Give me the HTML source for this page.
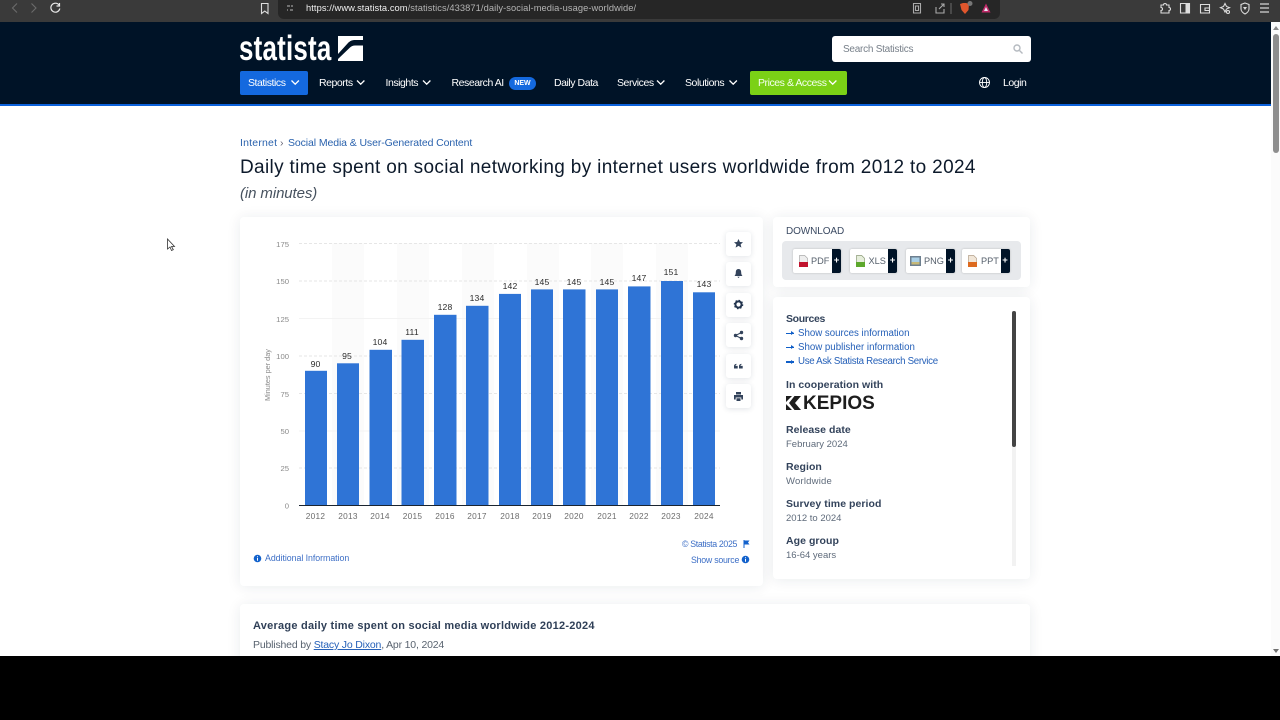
<!DOCTYPE html>
<html lang="en"><head><meta charset="utf-8"><title>Statista</title>
<style>
*{box-sizing:border-box}
html,body{margin:0;padding:0;width:1280px;height:720px;overflow:hidden;background:#000;font-family:"Liberation Sans",sans-serif}
#p{position:absolute;left:0;top:0;width:1280px;height:656px;background:#fff;overflow:hidden}
.a{position:absolute;white-space:nowrap}
.card{position:absolute;background:#fff;border-radius:4px;box-shadow:0 1px 14px rgba(20,40,70,.09)}
.nav{position:absolute;top:76.5px;font-size:10.5px;line-height:13px;color:#fff;white-space:nowrap;letter-spacing:-.45px}
.tool{position:absolute;left:726px;width:25px;height:24px;background:#fff;border-radius:3px;box-shadow:0 1px 6px rgba(20,40,70,.13)}
.tool svg{position:absolute;left:7px;top:6.5px}
.h{position:absolute;left:786px;font-size:10.5px;font-weight:bold;color:#33435b;white-space:nowrap;line-height:13px;letter-spacing:.05px}
.v{position:absolute;left:786px;font-size:9.5px;color:#5f6b7b;white-space:nowrap;line-height:12px}
.l{position:absolute;left:798px;font-size:9.7px;color:#2560b8;white-space:nowrap;line-height:12px}
.ar{position:absolute;left:786px;width:8px;height:1.5px;background:#0f5ec8}
.ar:after{content:"";position:absolute;right:0;top:-1.5px;border-left:3px solid #0f5ec8;border-top:2.2px solid transparent;border-bottom:2.2px solid transparent}
.btn{position:absolute;top:249px;height:24px;background:#fff;border-radius:2px;box-shadow:0 0 2px rgba(0,0,0,.2);font-size:9.2px;color:#555f6b;line-height:24px}
.btn b{position:absolute;right:0;top:0;width:9px;height:24px;background:#001327;color:#fff;font-size:9.5px;text-align:center;border-radius:0 2px 2px 0}
.btn span{position:absolute;top:0}
.btn svg{position:absolute;top:6px}
</style></head><body>
<div id="p">
<!-- browser bar -->
<div class="a" style="left:0;top:0;width:1280px;height:22px;background:#3a3a3a"></div>
<div class="a" style="left:278px;top:0;width:722px;height:19px;background:#262626;border-radius:0 0 6px 6px"></div>
<svg class="a" style="left:0;top:0" width="1280" height="22" fill="none" stroke="#ddd" stroke-width="1.1">
<path d="M17 3.5L12.5 8l4.5 4.5M31.5 3.5L36 8l-4.500 4.500" stroke="#6b6b6b"/>
<path d="M59 5a4.500 4.500 0 1 0 .8 3.500M59.500 3v3h-3" stroke="#e8e8e8" stroke-width="1.200"/>
<path d="M261.500 3.500h6.500v10l-3.250-2.400-3.250 2.400z"/>
<path d="M287 6h3M291 6h2M287 10h1M290 10h3" stroke="#bbb"/>
<path d="M913.500 3.500h7v9.500h-7zM915.500 6h3v4.500h-3z" stroke="#aaa"/>
<path d="M936 7v6h8V9M939 9l5-5m-3 0h3v3" stroke="#aaa"/>
<path d="M951 3v11" stroke="#666"/>
<path d="M960 4l3-1h3l3 1-.5 6-3.500 4-3.500-4z" fill="#e0562c" stroke="none"/>
<circle cx="970" cy="3.500" r="2.500" fill="#777" stroke="none"/>
<path d="M986 3.500l4.500 9h-9z" fill="#c02a68" stroke="none"/><path d="M986 7l2 4h-4z" fill="#e9e6f5" stroke="none"/>
<path d="M1161 5h2.500a1.500 1.500 0 0 1 3 0h2.500v2.500a1.500 1.500 0 0 1 0 3V13h-8v-2.500a1.500 1.500 0 0 0 0-3z"/>
<path d="M1180.500 3.500h9v9.500h-9z"/><path d="M1185.500 4h4v8.500h-4z" fill="#ddd" stroke="none"/>
<path d="M1200.500 4.500h9v8.500h-9zM1205 8h4.500v2.500H1205z"/>
<path d="M1225 3.500l1.500 3 3 1.200-3 1.300-1.500 3-1.500-3-3-1.300 3-1.200z"/><circle cx="1228" cy="12" r="1.500"/>
<path d="M1245 3l4 1.500V9c0 2-2 4-4 5-2-1-4-3-4-5V4.500z"/><path d="M1243 7h4l-2 3z" fill="#ddd" stroke="none"/>
<path d="M1260 4h9M1260 8h9M1260 12h9" stroke="#bbb" stroke-width="1.400"/>
</svg>
<div class="a" style="left:306px;top:2px;font-size:9.3px;line-height:12px;color:#f0f0f0;letter-spacing:.08px">https://www.statista.com<span style="color:#b4b4b4">/statistics/433871/daily-social-media-usage-worldwide/</span></div>
<!-- header -->
<div class="a" style="left:0;top:22px;width:1271px;height:82px;background:#001327"></div>
<div class="a" style="left:0;top:104px;width:1271px;height:2px;background:#0c62dc"></div>
<div class="a" style="left:239px;top:29.500px;font-size:35px;line-height:38px;font-weight:bold;color:#fff;transform:scaleX(.74);transform-origin:0 0;letter-spacing:.3px">statista</div>
<svg class="a" style="left:338px;top:36px" width="25" height="25"><rect width="25" height="25" fill="#fff"/><path d="M25 4H17C14 4 12 5 10 7L0 18V23L12 11.500C13.500 10.200 15 9.500 17 9.500H25Z" fill="#001327"/></svg>
<div class="a" style="left:832px;top:35.500px;width:199px;height:26px;background:#fff;border-radius:3px"></div>
<div class="a" style="left:843px;top:42.500px;font-size:10px;line-height:13px;color:#78808a;letter-spacing:-.25px">Search Statistics</div>
<svg class="a" style="left:1013px;top:44px" width="10" height="10" fill="none" stroke="#b5bac0" stroke-width="1.400"><circle cx="4" cy="4" r="3"/><path d="M6.500 6.500L9.500 9.500"/></svg>
<div class="a" style="left:240px;top:71px;width:68px;height:24px;background:#1469df;border-radius:2px"></div>
<div class="a" style="left:750px;top:71px;width:97px;height:24px;background:#7bd116;border-radius:2px"></div>
<div class="nav" style="left:248px">Statistics</div>
<div class="nav" style="left:319px">Reports</div>
<div class="nav" style="left:385.500px">Insights</div>
<div class="nav" style="left:451.500px">Research AI</div>
<div class="a" style="left:509px;top:76.500px;width:27px;height:13px;background:#1469df;border-radius:7px;color:#fff;font-size:7px;font-weight:bold;line-height:13px;text-align:center">NEW</div>
<div class="nav" style="left:554px">Daily Data</div>
<div class="nav" style="left:617px">Services</div>
<div class="nav" style="left:685px">Solutions</div>
<div class="nav" style="left:758px;color:#f4fff0">Prices &amp; Access</div>
<div class="nav" style="left:1003px">Login</div>
<svg class="a" style="left:0;top:70px" width="1100" height="26" fill="none" stroke="#fff" stroke-width="1.300">
<path d="M291.500 10.500l3.700 3.700 3.700-3.700M357 10.500l3.700 3.700 3.700-3.700M423 10.500l3.700 3.700 3.700-3.700M657 10.500l3.700 3.700 3.700-3.700M729.500 10.500l3.700 3.700 3.700-3.700M829 10.500l3.700 3.700 3.700-3.700"/>
<g stroke-width=".9"><circle cx="984.500" cy="12.500" r="5"/><ellipse cx="984.500" cy="12.500" rx="2.200" ry="5"/><path d="M979.500 12.500h10"/></g>
</svg>
<!-- heading -->
<div class="a" style="left:240px;top:136px;font-size:10.500px;line-height:14px;color:#2a62ad;letter-spacing:.2px">Internet</div>
<div class="a" style="left:280px;top:136px;font-size:10.500px;line-height:14px;color:#667">›</div>
<div class="a" style="left:288px;top:136px;font-size:10.500px;line-height:14px;color:#2a62ad;letter-spacing:-.1px">Social Media &amp; User-Generated Content</div>
<div class="a" style="left:240px;top:156.500px;font-size:19px;line-height:22px;color:#0d1a2b;letter-spacing:.34px">Daily time spent on social networking by internet users worldwide from 2012 to 2024</div>
<div class="a" style="left:240px;top:183.500px;font-size:15px;line-height:19px;font-style:italic;color:#47525f;letter-spacing:-.1px">(in minutes)</div>
<!-- chart card -->
<div class="card" style="left:240px;top:217px;width:523px;height:369px"></div>
<div class="card" style="left:773px;top:217px;width:257px;height:70px"></div>
<div class="card" style="left:773px;top:297px;width:257px;height:282px"></div>
<div class="card" style="left:240px;top:604px;width:790px;height:80px"></div>
<svg class="a" style="left:240px;top:217px" width="523" height="340" font-family="Liberation Sans, sans-serif">
<g fill="#fbfbfb"><rect x="92" y="26" width="32" height="262"/><rect x="157" y="26" width="32" height="262"/><rect x="222" y="26" width="32" height="262"/><rect x="287" y="26" width="32" height="262"/><rect x="351" y="26" width="32" height="262"/><rect x="416" y="26" width="32" height="262"/></g>
<g stroke="#e6e6e6" stroke-width="1" stroke-dasharray="3 2"><path d="M59 26.500h421M59 64h421M59 139h421M59 176.500h421M59 251h421"/></g>
<g stroke="#f3f3f3" stroke-width="1"><path d="M59 101.500h421M59 214h421"/></g>
<g fill="#2f74d6">
<rect x="65" y="153.800" width="22" height="134.700"/><rect x="97" y="146.300" width="22" height="142.200"/><rect x="129.500" y="132.800" width="22.500" height="155.700"/><rect x="161.500" y="122.800" width="22.500" height="165.700"/><rect x="194" y="97.800" width="22.500" height="190.700"/><rect x="226" y="88.800" width="22.500" height="199.700"/><rect x="259" y="76.900" width="22" height="211.600"/><rect x="291" y="72.400" width="22" height="216.100"/><rect x="323" y="72.400" width="22.500" height="216.100"/><rect x="356" y="72.400" width="22" height="216.100"/><rect x="388" y="69.400" width="22.500" height="219.100"/><rect x="421" y="64" width="22" height="224.500"/><rect x="453" y="75.300" width="22" height="213.200"/>
</g>
<path d="M59 288.500h421" stroke="#1a2430" stroke-width="1"/>
<g font-size="7.700" fill="#8a8a8a" text-anchor="end"><text x="49" y="30">175</text><text x="49" y="67">150</text><text x="49" y="105">125</text><text x="49" y="142">100</text><text x="49" y="180">75</text><text x="49" y="217">50</text><text x="49" y="254">25</text><text x="49" y="291.500">0</text></g>
<text transform="translate(30 184) rotate(-90)" font-size="7.300" fill="#8a8a8a">Minutes per day</text>
<g font-size="8.600" fill="#2c2c2c" text-anchor="middle" letter-spacing=".15"><text x="75.500" y="150">90</text><text x="107" y="142">95</text><text x="140" y="128">104</text><text x="172" y="118">111</text><text x="205" y="93">128</text><text x="237" y="84">134</text><text x="270" y="72">142</text><text x="302" y="68">145</text><text x="334" y="68">145</text><text x="367" y="68">145</text><text x="399" y="64">147</text><text x="431" y="58">151</text><text x="464" y="70">143</text></g>
<g font-size="8.300" fill="#6c6c6c" text-anchor="middle" letter-spacing=".25"><text x="75.500" y="302">2012</text><text x="108" y="302">2013</text><text x="140" y="302">2014</text><text x="172.500" y="302">2015</text><text x="205" y="302">2016</text><text x="237" y="302">2017</text><text x="270" y="302">2018</text><text x="302" y="302">2019</text><text x="334" y="302">2020</text><text x="367" y="302">2021</text><text x="399" y="302">2022</text><text x="431" y="302">2023</text><text x="464" y="302">2024</text></g>
</svg>
<!-- tools -->
<div class="tool" style="top:232px"><svg width="11" height="11" style="top:6px"><path d="M5.500 1l1.400 3 3.100.3-2.400 2.100.8 3.200-2.900-1.700-2.900 1.700.8-3.200L1 4.300 4.100 4z" fill="#33435b"/></svg></div>
<div class="tool" style="top:262px"><svg width="11" height="11" style="top:6px"><path d="M5.500 1C3.500 1 2.800 2.500 2.800 4.500c0 2-.8 2.800-1.300 3.500h8c-.5-.7-1.300-1.500-1.300-3.500C8.200 2.500 7.500 1 5.500 1zM4.300 8.800h2.400L5.500 10z" fill="#33435b"/></svg></div>
<div class="tool" style="top:292.500px"><svg width="11" height="11" style="top:6px"><circle cx="5.500" cy="5.500" r="3.100" fill="none" stroke="#22344e" stroke-width="2"/><circle cx="5.500" cy="5.500" r="4.200" fill="none" stroke="#22344e" stroke-width="1.200" stroke-dasharray="1.500 1.800"/></svg></div>
<div class="tool" style="top:323px"><svg width="11" height="11" fill="#33435b"><circle cx="8.500" cy="2.500" r="1.700"/><circle cx="8.500" cy="8.500" r="1.700"/><circle cx="2.500" cy="5.500" r="1.700"/><path d="M8.500 2.500l-6 3 6 3" fill="none" stroke="#33435b"/></svg></div>
<div class="tool" style="top:354px"><svg width="11" height="11" fill="#33435b"><path d="M1 7.500V5.200C1 3.800 1.700 3 3.400 2.700v1.200c-.6.200-.9.500-.9 1H4.700v2.600zM6 7.500V5.200C6 3.800 6.700 3 8.400 2.700v1.200c-.6.200-.9.500-.9 1H9.700v2.600z"/></svg></div>
<div class="tool" style="top:384px"><svg width="11" height="11" fill="#33435b"><path d="M3 1h5v2.500H3zM1 4h9v4.500H8.300V6.500H2.700v2H1zM3.500 7.300h4V10h-4z"/></svg></div>
<!-- chart footer -->
<svg class="a" style="left:253px;top:554px" width="9" height="9"><circle cx="4.500" cy="4.500" r="3.800" fill="#1362cc"/><path d="M4.500 2v.8M4.500 3.800v3" stroke="#fff"/></svg>
<div class="a" style="left:265px;top:552px;font-size:8.800px;line-height:12px;color:#3d6fc6;letter-spacing:-.04px">Additional Information</div>
<div class="a" style="left:682px;top:538px;font-size:8.800px;line-height:12px;color:#3d6fc6;letter-spacing:-.35px">© Statista 2025</div>
<svg class="a" style="left:743px;top:540px" width="7" height="8"><path d="M1 0v8" stroke="#1362cc"/><path d="M1 .5h5.500L5 2.500 6.500 4.500H1z" fill="#1362cc"/></svg>
<div class="a" style="left:691px;top:554px;font-size:8.800px;line-height:12px;color:#3d6fc6;letter-spacing:-.25px">Show source</div>
<svg class="a" style="left:741px;top:555px" width="9" height="9"><circle cx="4.500" cy="4.500" r="3.800" fill="#1362cc"/><path d="M4.500 2v.8M4.500 3.800v3" stroke="#fff"/></svg>
<!-- download -->
<div class="a" style="left:786px;top:225px;font-size:10px;line-height:13px;color:#3c4b63;letter-spacing:-.1px">DOWNLOAD</div>
<div class="a" style="left:782px;top:241px;width:239px;height:39px;background:#e7e9ec;border-radius:4px"></div>
<div class="btn" style="left:793px;width:48px"><svg style="left:6px" width="9" height="12"><path d="M.5.500h5.200l2.800 2.800V11.500H.5z" fill="#eee" stroke="#aaa" stroke-width=".7"/><rect y="7" width="9" height="5" fill="#c1132e"/></svg><span style="left:18px">PDF</span><b>+</b></div>
<div class="btn" style="left:849.500px;width:47.500px"><svg style="left:6px" width="9" height="12"><path d="M.5.500h5.200l2.800 2.800V11.500H.5z" fill="#e6eedb" stroke="#8c9b78" stroke-width=".7"/><rect y="7" width="9" height="5" fill="#5da82c"/></svg><span style="left:19px">XLS</span><b>+</b></div>
<div class="btn" style="left:905.500px;width:49.500px"><svg style="left:4px;top:6.500px" width="11" height="11"><rect width="11" height="10" fill="#6d7f8f"/><rect x="1.500" y="1.500" width="8" height="7" fill="#a9cfe6"/><rect x="1.500" y="6" width="8" height="2.500" fill="#c7b978"/></svg><span style="left:18.500px">PNG</span><b>+</b></div>
<div class="btn" style="left:962px;width:47.500px"><svg style="left:6px" width="9" height="12"><path d="M.5.500h5.200l2.800 2.800V11.500H.5z" fill="#f1e6d8" stroke="#b3a08a" stroke-width=".7"/><rect y="7" width="9" height="5" fill="#dd6a1f"/></svg><span style="left:19px">PPT</span><b>+</b></div>
<!-- sources -->
<div class="a" style="left:1012px;top:311px;width:4px;height:255px;background:#f2f2f2"></div>
<div class="a" style="left:1012px;top:311px;width:4px;height:136px;background:#444;border-radius:2px"></div>
<div class="h" style="top:313px;letter-spacing:-.35px">Sources</div>
<div class="ar" style="top:332.500px"></div><div class="l" style="top:328px">Show sources information</div>
<div class="ar" style="top:346.500px"></div><div class="l" style="top:342px">Show publisher information</div>
<div class="ar" style="top:361px"></div><div class="l" style="top:356px;letter-spacing:-.3px">Use Ask Statista Research Service</div>
<div class="h" style="top:379px">In cooperation with</div>
<svg class="a" style="left:786px;top:395px" width="16" height="16" fill="#1d1d1d"><path d="M0 1h6L0 7zM0 9l6 6H0zM8.500 1h6.500L9 8l6 7H8.500L3 8z"/></svg>
<div class="a" style="left:803px;top:393px;font-size:19px;line-height:22px;font-weight:bold;color:#1d1d1d;letter-spacing:0">KEPIOS</div>
<div class="h" style="top:424px">Release date</div><div class="v" style="top:438.500px">February 2024</div>
<div class="h" style="top:461px">Region</div><div class="v" style="top:475.500px;letter-spacing:.2px">Worldwide</div>
<div class="h" style="top:498px">Survey time period</div><div class="v" style="top:512.500px">2012 to 2024</div>
<div class="h" style="top:535px">Age group</div><div class="v" style="top:549.500px">16-64 years</div>
<!-- article -->
<div class="a" style="left:253px;top:619px;font-size:11px;line-height:14px;font-weight:bold;color:#2f3f57;letter-spacing:.24px">Average daily time spent on social media worldwide 2012-2024</div>
<div class="a" style="left:253px;top:638px;font-size:10.500px;line-height:14px;color:#59636f;letter-spacing:-.18px">Published by <span style="color:#2560b8;text-decoration:underline">Stacy Jo Dixon</span>, Apr 10, 2024</div>
<!-- scrollbar -->
<div class="a" style="left:1271px;top:22px;width:9px;height:634px;background:#fbfbfb"></div>
<div class="a" style="left:1272.500px;top:34px;width:6px;height:119px;background:#8e8e8e;border-radius:3px"></div>
<div class="a" style="left:1272.500px;top:25.500px;width:0;height:0;border-left:3px solid transparent;border-right:3px solid transparent;border-bottom:4px solid #8a8a8a"></div>
<div class="a" style="left:1272.500px;top:649px;width:0;height:0;border-left:3px solid transparent;border-right:3px solid transparent;border-top:4px solid #707070"></div>
<!-- cursor -->
<svg class="a" style="left:166px;top:238px" width="10" height="14"><path d="M1.500 1v10l2.500-2 1.500 3.500 1.800-.8L5.500 8.500H8.500z" fill="#fff" stroke="#333" stroke-width=".8"/></svg>
</div>
</body></html>
